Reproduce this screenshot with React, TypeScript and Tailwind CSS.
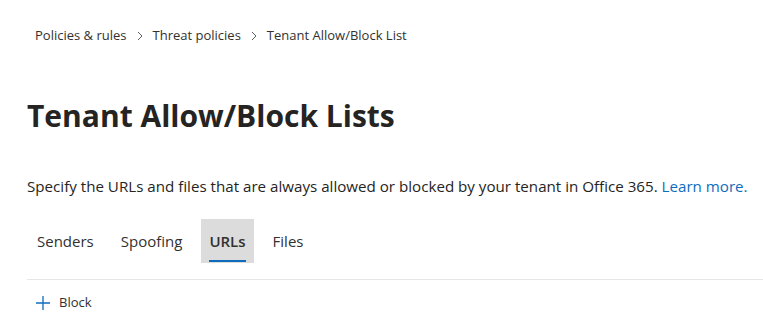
import React from "react";

function Chevron() {
  return (
    <svg width="8" height="10" viewBox="0 0 8 10" className="mx-[9px]">
      <path d="M2 1 L6 5 L2 9" fill="none" stroke="#605e5c" strokeWidth="1" />
    </svg>
  );
}

export default function App() {
  return (
    <div className="w-[763px] h-[321px] bg-white text-[#323130] overflow-hidden font-['Open_Sans',sans-serif]">
      <div className="pl-[27px]">
        <div className="flex items-center h-[18px] mt-[27px] pl-[8px] text-[13px] text-[#323130]">
          <span>Policies &amp; rules</span>
          <Chevron />
          <span>Threat policies</span>
          <Chevron />
          <span>Tenant Allow/Block List</span>
        </div>
        <h1 className="mt-[51px] text-[30px] leading-[40px] font-bold text-[#252423]">Tenant Allow/Block Lists</h1>
        <p className="mt-[40px] text-[15.15px] leading-[20px] text-[#252423]">
          Specify the URLs and files that are always allowed or blocked by your tenant in Office 365.{" "}
          <span className="text-[#0f6cbd]">Learn more.</span>
        </p>
        <div className="flex gap-[11px] ml-[2px] mt-[23px] h-[44px] text-[15px]">
          <div className="px-[8px] flex items-center">Senders</div>
          <div className="px-[8px] flex items-center">Spoofing</div>
          <div className="relative px-[8px] flex items-center bg-[#dcdcdc] font-semibold">
            URLs
            <div className="absolute left-[8px] right-[8px] bottom-[1px] h-[2px] bg-[#0f6cbd]" />
          </div>
          <div className="px-[8px] flex items-center">Files</div>
        </div>
        <div className="mt-[16px] h-px bg-[#e8e6e4]" />
        <div className="flex items-center mt-[13px] pl-[8px] text-[13px]">
          <svg width="16" height="16" viewBox="0 0 16 16">
            <path d="M8 1 V15 M1 8 H15" stroke="#0f6cbd" strokeWidth="1.3" />
          </svg>
          <span className="ml-[8px]">Block</span>
        </div>
      </div>
    </div>
  );
}
